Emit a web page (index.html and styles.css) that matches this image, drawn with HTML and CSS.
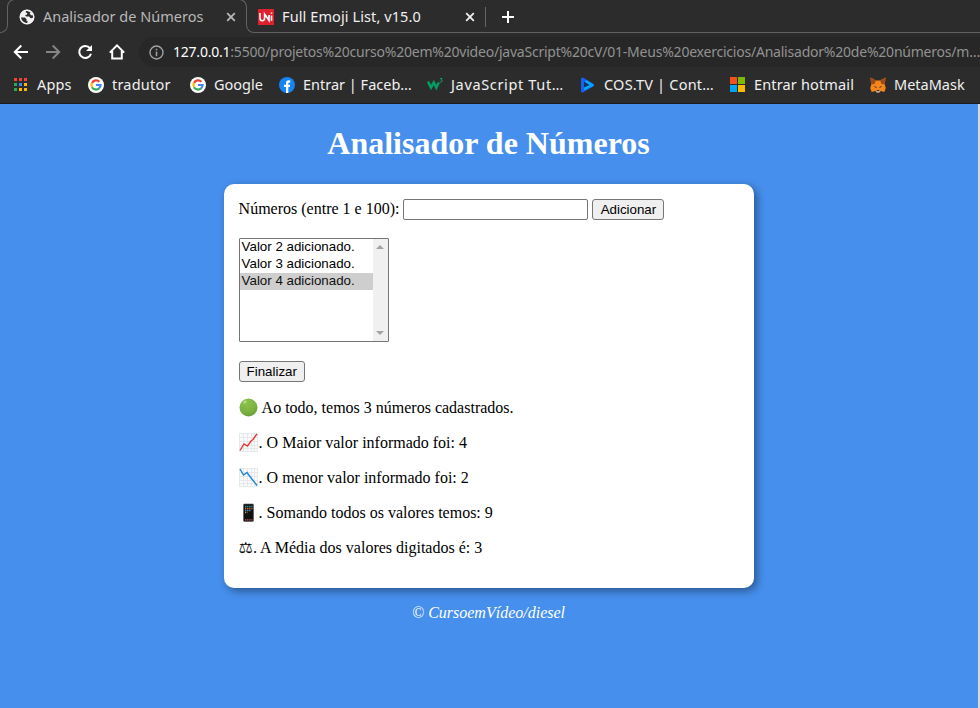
FILE: index.html
```html
<!DOCTYPE html>
<html lang="pt-br">
<head>
<meta charset="UTF-8">
<title>Analisador de Números</title>
<link rel="stylesheet" href="styles.css">
</head>
<body>
<svg width="0" height="0" class="defs">
  <symbol id="google" viewBox="0 0 16 16"><circle cx="8" cy="8" r="8" fill="#fff"/><g fill="none" stroke-width="2.2"><path d="M4 6A4.600 4.600 0 0 1 11.400 4.700" stroke="#ea4335"/><path d="M4 10.200a4.700 4.700 0 0 1 0-4.400" stroke="#fbbc05"/><path d="M11 11.400a4.600 4.600 0 0 1-7-1.200" stroke="#34a853"/><path d="M8 8h4.600a4.600 4.600 0 0 1-1.600 3.400" stroke="#4285f4"/></g></symbol>
  <symbol id="close" viewBox="0 0 10 10"><path d="M1.200 1.200l7.600 7.600M8.800 1.200L1.200 8.800" fill="none" stroke="currentColor" stroke-width="1.800"/></symbol>
</svg>
<header class="browser">
  <div class="tabs">
    <div class="edge"></div>
    <div class="tab active">
      <svg width="16" height="16" viewBox="0 0 16 16"><circle cx="8" cy="8" r="7.200" fill="#f1f1f1"/><path d="M1.700 8.500l4.200.1 1.700 1.600-.2 1.600 1.200.4-.3 2.200-2.500-.3-3-2.500zM7 1.600l-.3 2 1.500.5-.2 1.600-2 .2 1.100 1.600 3 .1 1.300 1.500 1.500.2 1.300-1 .1-2-2.300-.1-1.300-1.800.9-1.500z" fill="#2c2c2c"/><circle cx="8" cy="8" r="6.800" fill="none" stroke="#f1f1f1" stroke-width="1.400"/></svg>
      <span class="title t1">Analisador de Números</span>
      <svg class="x" width="10" height="10"><use href="#close"/></svg>
    </div>
    <div class="tab second">
      <span class="uni"><svg width="16" height="16" viewBox="0 0 16 16"><path d="M2 4v5q0 2.800 2.300 2.800T6.600 9V5l4.400 6.500V6M13.500 6.500v5.300M13.500 3.500v1.300" fill="none" stroke="#fff" stroke-width="1.600"/></svg></span>
      <span class="title t2">Full Emoji List, v15.0</span>
      <svg class="x" width="10" height="10"><use href="#close"/></svg>
      <span class="split"></span>
      <svg class="plus" width="12" height="12" viewBox="0 0 12 12"><path d="M6 0v12M0 6h12" stroke="#fff" stroke-width="2"/></svg>
    </div>
  </div>
  <div class="toolbar">
    <svg width="16" height="16" viewBox="0 0 16 16" class="nav"><path d="M15 8H2M8.300 1.500L1.800 8l6.500 6.500"/></svg>
    <svg width="16" height="16" viewBox="0 0 16 16" class="nav dim"><path d="M1 8h13M7.700 1.500L14.200 8l-6.500 6.500"/></svg>
    <svg width="16" height="16" viewBox="0 0 16 16" class="nav"><path d="M13 4.200A6 6 0 1 0 14 9.700"/><path d="M15 1v6H9z" fill="#fff" stroke="none"/></svg>
    <svg width="16" height="16" viewBox="0 0 16 16" class="nav"><path d="M.8 8.600L8 1.400l7.200 7.200M3.200 7v7.600h9.600V7"/></svg>
    <div class="address">
      <svg width="15" height="15" viewBox="0 0 15 15"><circle cx="7.500" cy="7.500" r="6.500" fill="none" stroke="#a0a2a5" stroke-width="1.400"/><path d="M7.500 6.500v4.700M7.500 3.700v1.600" stroke="#a0a2a5" stroke-width="1.500"/></svg>
      <span class="url"><b>127.0.0.1</b>:5500/projetos%20curso%20em%20video/javaScript%20cV/01-Meus%20exercicios/Analisador%20de%20números/m…</span>
    </div>
  </div>
  <nav class="bookmarks">
    <a class="w75"><svg width="16" height="16" viewBox="0 0 16 16"><path d="M1 1h3v3H1zM6 1h3v3H6zM11 1h3v3h-3z" fill="#f04438"/><path d="M1 6h3v3H1zM1 11h3v3H1z" fill="#34a853"/><path d="M6 6h3v3H6z" fill="#4285f4"/><path d="M11 6h3v3h-3zM6 11h3v3H6zM11 11h3v3h-3z" fill="#fbb905"/></svg><span class="b1">Apps</span></a>
    <a class="w102"><svg width="16" height="16"><use href="#google"/></svg><span class="b2">tradutor</span></a>
    <a class="w89"><svg width="16" height="16"><use href="#google"/></svg><span>Google</span></a>
    <a class="w148"><svg width="16" height="16" viewBox="0 0 16 16"><circle cx="8" cy="8" r="8" fill="#1485f2"/><path d="M7 15.900V10H5V7.700h2V6.200Q7 3.300 9.800 3.300l1.500.1v2h-1q-1 0-1 1v1.300h1.900L10.800 10H9.300v5.900z" fill="#fff"/></svg><span>Entrar | Faceb…</span></a>
    <a class="w153"><svg width="16" height="16" viewBox="0 0 16 16"><path d="M1 4.500L4 10.500l2.800-5 2.500 5 2.500-5" fill="none" stroke="#049c61" stroke-width="2.600"/><path d="M12.800 1.500h2.300l-1.200 1.600q1.500 0 1.300 1.200t-2.500.8" fill="none" stroke="#049c61"/></svg><span class="b5">JavaScript Tut…</span></a>
    <a class="w150"><svg width="16" height="16" viewBox="0 0 16 16"><path d="M2.500 2L12.500 8l-10 6z" fill="#10315c" stroke="#1462f5" stroke-width="3" stroke-linejoin="round"/><path d="M4 12L12.500 8.200l-7-4.200" fill="none" stroke="#05a4ff" stroke-width="2.500" stroke-linejoin="round"/></svg><span class="b6">COS.TV | Cont…</span></a>
    <a class="w140"><svg width="16" height="16" viewBox="0 0 16 16"><path d="M0 0h7v7H0z" fill="#f4511e"/><path d="M8 0h7v7H8z" fill="#7eba00"/><path d="M0 8h7v7H0z" fill="#02a4ef"/><path d="M8 8h7v7H8z" fill="#ffb902"/></svg><span class="b7">Entrar hotmail</span></a>
    <a><svg width="16" height="16" viewBox="0 0 16 16"><path d="M.5.500L6 3.500h4L15.500.500l-.7 7.500 1 3-1.500 4-3.500-1-1.500 1.500H6.700L5.200 14l-3.500 1L.2 11l1-3z" fill="#f6851b"/><path d="M.5.500L6 3.500 4.500 7l-3.300.5zM15.500.500L10 3.500 11.500 7l3.300.5z" fill="#9a4b18"/><path d="M5.500 13.500h5l-1.300 2H6.800z" fill="#c0ad9e"/><path d="M4.500 9.500l2 1M11.500 9.500l-2 1M6.700 13.500h2.600" stroke="#333"/></svg><span>MetaMask</span></a>
  </nav>
</header>
<main class="page">
  <h1>Analisador de Números</h1>
  <section class="card">
    <div class="entry"><label for="num">Números (entre 1 e 100):</label><input id="num" type="text"><button class="add">Adicionar</button></div>
    <div class="listbox">
      <ul><li>Valor 2 adicionado.</li><li>Valor 3 adicionado.</li><li class="selected">Valor 4 adicionado.</li></ul>
      <div class="scroll"><svg width="8" height="4" viewBox="0 0 8 4"><path d="M0 4L4 0l4 4z" fill="#a3a3a3"/></svg><svg width="8" height="4" viewBox="0 0 8 4"><path d="M0 0h8L4 4z" fill="#a3a3a3"/></svg></div>
    </div>
    <button class="finish">Finalizar</button>
    <p><svg class="emoji" width="20" height="19" viewBox="0 0 20 19"><defs><radialGradient id="green" cx=".4" cy=".25" r=".8"><stop offset="0" stop-color="#8bc34a"/><stop offset=".6" stop-color="#7cb342"/><stop offset="1" stop-color="#689f38"/></radialGradient></defs><circle cx="9.500" cy="9.500" r="9" fill="url(#green)"/><ellipse cx="6" cy="4" rx="2" ry="1.200" transform="rotate(-35 6 4)" fill="#b5dc87"/></svg><span class="after-dot">Ao todo, temos 3 números cadastrados.</span></p>
    <p><svg class="emoji" width="20" height="19" viewBox="0 0 20 19"><path d="M.5.500h18v18H.5zM4.500.500v18M8.500.500v18M12.500.500v18M15.500.500v18M.5 4.500h18M.5 8.500h18M.5 12.500h18M.5 15.500h18" fill="#fafafa" stroke="#e0e5e8" stroke-width=".8"/><path d="M1 17.500l4-6.500 3.500 2 3.500-5 2-1.500L18 .8" fill="none" stroke="#e53935" stroke-width="1.400"/></svg><span>. O Maior valor informado foi: 4</span></p>
    <p><svg class="emoji" width="20" height="19" viewBox="0 0 20 19"><path d="M.5.500h18v18H.5zM4.500.500v18M8.500.500v18M12.500.500v18M15.500.500v18M.5 4.500h18M.5 8.500h18M.5 12.500h18M.5 15.500h18" fill="#fafafa" stroke="#e0e5e8" stroke-width=".8"/><path d="M1 1l3.500 6L8 4.500l4.500 6L18 17.500" fill="none" stroke="#1e88d2" stroke-width="1.400"/></svg><span>. O menor valor informado foi: 2</span></p>
    <p><svg class="emoji" width="20" height="19" viewBox="0 0 20 19"><rect x="4.500" y="1" width="10" height="17.500" rx="1" fill="#111" stroke="#555" stroke-width=".6"/><g stroke-width="1.300" stroke-dasharray="1.300 .8"><path d="M6 3.500h7.500" stroke="#259ab0"/><path d="M6 5.500h7.500" stroke="#d66b32"/><path d="M6 7.500h6" stroke="#5a9ab5"/><path d="M6 9.500h2.500" stroke="#b29a44"/><path d="M6 16.800h7.500" stroke="#cf5959"/></g></svg><span>. Somando todos os valores temos: 9</span></p>
    <p><span class="scale">⚖</span><span>. A Média dos valores digitados é: 3</span></p>
  </section>
  <footer>© CursoemVídeo/diesel</footer>
</main>
</body>
</html>
```
FILE: styles.css
```css
* { box-sizing: border-box; }
body { margin: 0; height: 708px; overflow: hidden; background: #468fed; font: 16px "Liberation Serif", serif; color: #000; }
.defs { position: absolute; }
svg { display: block; flex: none; }
.browser { height: 104px; background: #2c2c2c; border-bottom: 1px solid #191b20; font-family: "Noto Sans", sans-serif; font-size: 14.5px; color: #f0f0f0; white-space: nowrap; }
.tabs { height: 33px; display: flex; }
.edge { width: 8px; margin-top: 7px; border-right: 1px solid #626262; border-bottom: 1px solid #626262; border-bottom-right-radius: 8px; }
.tab { display: flex; align-items: center; }
.active { width: 240px; height: 20px; margin: -1px -1px 0; padding: 14px 0 0 11px; color: #b8b8b8; border: 1px solid #626262; border-width: 1px 1px 0; border-radius: 8px 8px 0 0; }
.active > * { margin-top: 0; }
.second { position: relative; flex: 1; padding-left: 12px; }
.second::before { content: ""; position: absolute; inset: 7px 0 0 0; border: 1px solid #626262; border-width: 0 0 1px 1px; border-bottom-left-radius: 8px; }
.title { margin-left: 8px; line-height: 20px; padding-bottom: 1px; }
.active .title { margin-top: -1px; }
.t1 { width: 183px; }
.t2 { width: 183px; letter-spacing: 0.1px; }
.uni { background: #df202d; width: 16px; height: 16px; }
.split { width: 1px; height: 20px; background: #666; margin-left: 10px; }
.plus { margin-left: 16px; }
.toolbar { height: 37px; display: flex; align-items: center; padding: 1px 0 0 13px; gap: 16px; }
.nav { fill: none; stroke: #fff; stroke-width: 2; }
.dim { stroke: #858585; }
.address { flex: 1; height: 30px; margin-left: -2px; border-radius: 15px 0 0 15px; background: #272727; display: flex; align-items: center; padding-left: 10px; }
.url { margin: 0 0 1px 9px; font-size: 14px; color: #929292; letter-spacing: -0.22px; }
.url b { color: #fff; font-weight: 400; }
.bookmarks { height: 30px; display: flex; align-items: center; padding-left: 13px; }
.bookmarks a { display: flex; align-items: center; gap: 8px; }
.bookmarks span { padding-bottom: 2px; }
.b1, .b7 { letter-spacing: 0.15px; }
.b2, .b6 { letter-spacing: 0.22px; }
.b5 { letter-spacing: 0.65px; }
.w75 { width: 75px; } .w102 { width: 102px; } .w89 { width: 89px; } .w148 { width: 148px; }
.w153 { width: 153px; } .w150 { width: 150px; } .w140 { width: 140px; }
.page { width: 980px; height: 604px; border-right: 2px solid #d9d9d9; display: flex; flex-direction: column; align-items: center; }
h1 { margin: 21px 1px 22px 0; height: 37px; line-height: 37px; font-size: 32px; color: #fff; }
.card { width: 530px; height: 404px; padding: 15px 15px 15px 14.6px; background: #fff; border-radius: 10px; box-shadow: 3px 3px 8px rgba(0,0,0,.4); }
.entry { height: 21px; display: flex; align-items: center; }
label { padding-bottom: 2px; }
input { width: 185px; height: 21px; margin: 0 4px; border: 1px solid #767676; border-radius: 2px; padding: 1px 2px; background: #fff; }
button { height: 21px; display: block; border: 1px solid #767676; border-radius: 3px; background: #efefef; color: #000; padding: 0 7px; font: 13.333px "Liberation Sans", sans-serif; white-space: nowrap; }
.add { width: 72px; }
.listbox { width: 150px; height: 104px; margin: 18px 0 19px; border: 1px solid #767676; border-radius: 1px; display: flex; font: 13.333px/15px "Liberation Sans", sans-serif; }
ul { list-style: none; margin: 0; padding: 0; flex: 1; }
li { height: 17px; padding-left: 2px; white-space: nowrap; }
.selected { background: #cecece; color: #101010; }
.scroll { width: 15px; background: #f0f0f0; display: flex; flex-direction: column; justify-content: space-between; align-items: center; padding: 6px 0; }
p { height: 19px; margin: 16px 0 0; line-height: 19px; display: flex; white-space: nowrap; }
.after-dot { margin-left: 3px; }
.scale { font-family: "DejaVu Sans", sans-serif; }
footer { margin: 16px 1px 0 0; font-style: italic; line-height: 18px; color: #fff; }
```
